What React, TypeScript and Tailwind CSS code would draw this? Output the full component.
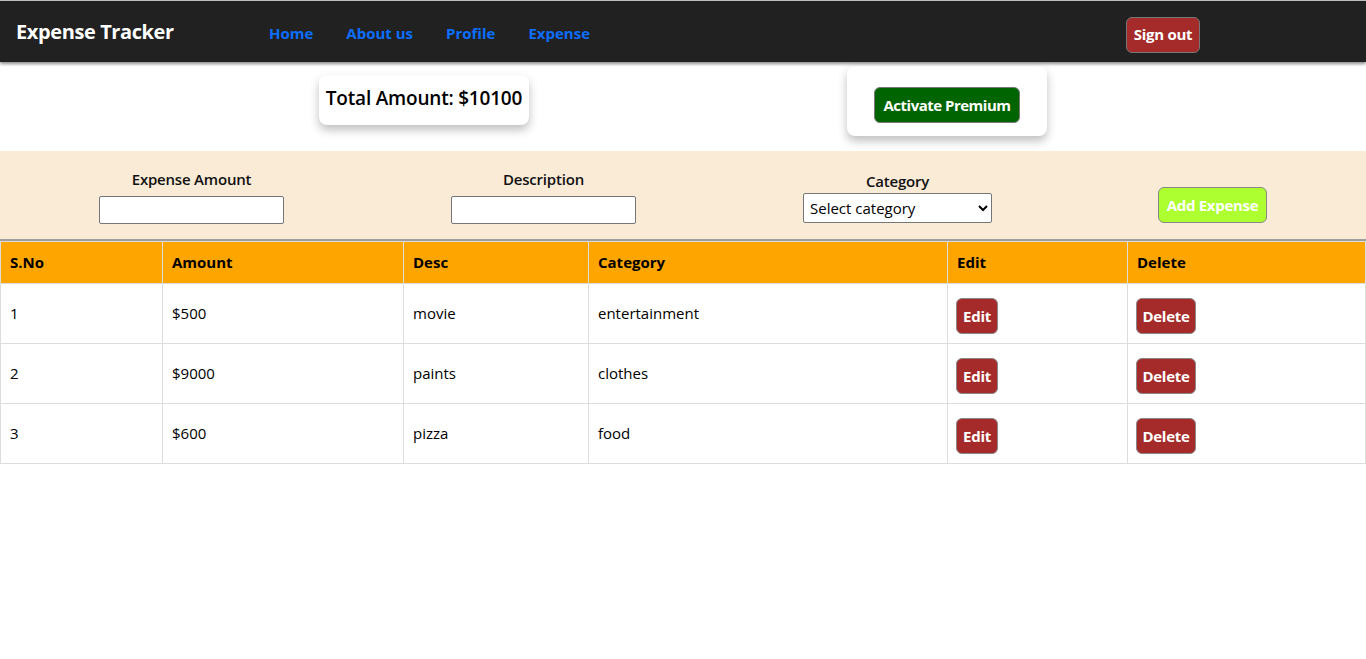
import React from "react";

const expenses = [
  { id: 1, amount: 500, desc: "movie", category: "entertainment" },
  { id: 2, amount: 9000, desc: "paints", category: "clothes" },
  { id: 3, amount: 600, desc: "pizza", category: "food" },
];

const font = { fontFamily: '"Open Sans", "Noto Sans", sans-serif' };

export default function App() {
  const total = expenses.reduce((s, e) => s + e.amount, 0);

  return (
    <div className="min-h-[659px] bg-white text-black" style={font}>
      {/* Navbar */}
      <nav className="h-[62px] bg-[#212121] border-t border-[#bdbdbd] shadow-[0_2px_3px_rgba(0,0,0,0.45)] flex items-center relative z-10">
        <div className="pl-4 w-[269px] mt-[1px] text-[20px] font-bold text-white tracking-[-0.4px]">
          Expense Tracker
        </div>
        <ul className="flex items-center gap-[33px] mt-[3px] text-[15px] font-bold text-[#0d6efd]">
          <li>Home</li>
          <li>About us</li>
          <li>Profile</li>
          <li>Expense</li>
        </ul>
        <button className="ml-auto mr-[166px] mt-[6px] h-[36px] w-[74px] rounded-[6px] border border-[#777] bg-[#a52a2a] text-white text-[15px] font-bold tracking-[-0.3px]">
          Sign out
        </button>
      </nav>

      {/* Summary cards */}
      <div className="flex h-[89px]">
        <div className="ml-[319px] mt-[13px] h-[50px] w-[210px] rounded-[8px] bg-white shadow-[0_5px_10px_rgba(0,0,0,0.25)] flex items-center justify-center pb-[3px] text-[19px] font-semibold tracking-[-0.2px]">
          Total Amount: ${total}
        </div>
        <div className="ml-[318px] mt-[4px] h-[70px] w-[200px] rounded-[8px] bg-white shadow-[0_5px_10px_rgba(0,0,0,0.25)] flex items-center justify-center">
          <button className="mt-[8px] h-[36px] w-[146px] rounded-[6px] border border-[#777] bg-[#006400] text-white text-[15px] font-bold tracking-[-0.5px]">
            Activate Premium
          </button>
        </div>
      </div>

      {/* Form */}
      <div className="h-[90px] bg-[#faebd7] border-b-2 border-[#9e9e9e] flex pl-[99px] gap-[167px] text-[15px] font-semibold text-[#111]">
        <div className="flex flex-col items-center pt-[18px]">
          <label className="leading-[20px] tracking-[-0.2px]">Expense Amount</label>
          <input className="mt-[7px] h-[28px] w-[185px] bg-white border border-[#767676] rounded-[2px]" />
        </div>
        <div className="flex flex-col items-center pt-[18px]">
          <label className="leading-[20px] tracking-[-0.2px]">Description</label>
          <input className="mt-[7px] h-[28px] w-[185px] bg-white border border-[#767676] rounded-[2px]" />
        </div>
        <div className="flex flex-col items-center pt-[20px]">
          <label className="leading-[20px] tracking-[-0.2px]">Category</label>
          <select className="mt-[2px] h-[30px] w-[189px] bg-white border border-[#767676] rounded-[2px] px-[2px] text-[15px] font-normal text-black">
            <option>Select category</option>
            <option>food</option>
            <option>clothes</option>
            <option>entertainment</option>
          </select>
        </div>
        <div className="pt-[36px] -ml-[1px]">
          <button className="h-[36px] w-[109px] rounded-[6px] border border-[#888] bg-[#adff2f] text-white text-[15px] font-bold tracking-[-0.3px]">
            Add Expense
          </button>
        </div>
      </div>

      {/* Table */}
      <table className="w-[1366px] table-fixed border-collapse text-[15px]">
        <thead>
          <tr className="h-[42px] bg-[#ffa500] text-left">
            <th className="w-[162px] border border-[#ddd] pl-[9px] font-bold">S.No</th>
            <th className="w-[241px] border border-[#ddd] pl-[9px] font-bold">Amount</th>
            <th className="w-[185px] border border-[#ddd] pl-[9px] font-bold">Desc</th>
            <th className="w-[359px] border border-[#ddd] pl-[9px] font-bold">Category</th>
            <th className="w-[180px] border border-[#ddd] pl-[9px] font-bold">Edit</th>
            <th className="border border-[#ddd] pl-[9px] font-bold">Delete</th>
          </tr>
        </thead>
        <tbody>
          {expenses.map((e) => (
            <tr key={e.id} className="h-[60px]">
              <td className="border border-[#ddd] pl-[9px]">{e.id}</td>
              <td className="border border-[#ddd] pl-[9px]">${e.amount}</td>
              <td className="border border-[#ddd] pl-[9px]">{e.desc}</td>
              <td className="border border-[#ddd] pl-[9px]">{e.category}</td>
              <td className="border border-[#ddd] pl-[8px]">
                <button className="mt-[5px] h-[36px] w-[42px] rounded-[6px] border border-[#888] bg-[#a52a2a] text-white text-[15px] font-bold tracking-[-0.3px]">
                  Edit
                </button>
              </td>
              <td className="border border-[#ddd] pl-[8px]">
                <button className="mt-[5px] h-[36px] w-[60px] rounded-[6px] border border-[#888] bg-[#a52a2a] text-white text-[15px] font-bold tracking-[-0.3px]">
                  Delete
                </button>
              </td>
            </tr>
          ))}
        </tbody>
      </table>
    </div>
  );
}
